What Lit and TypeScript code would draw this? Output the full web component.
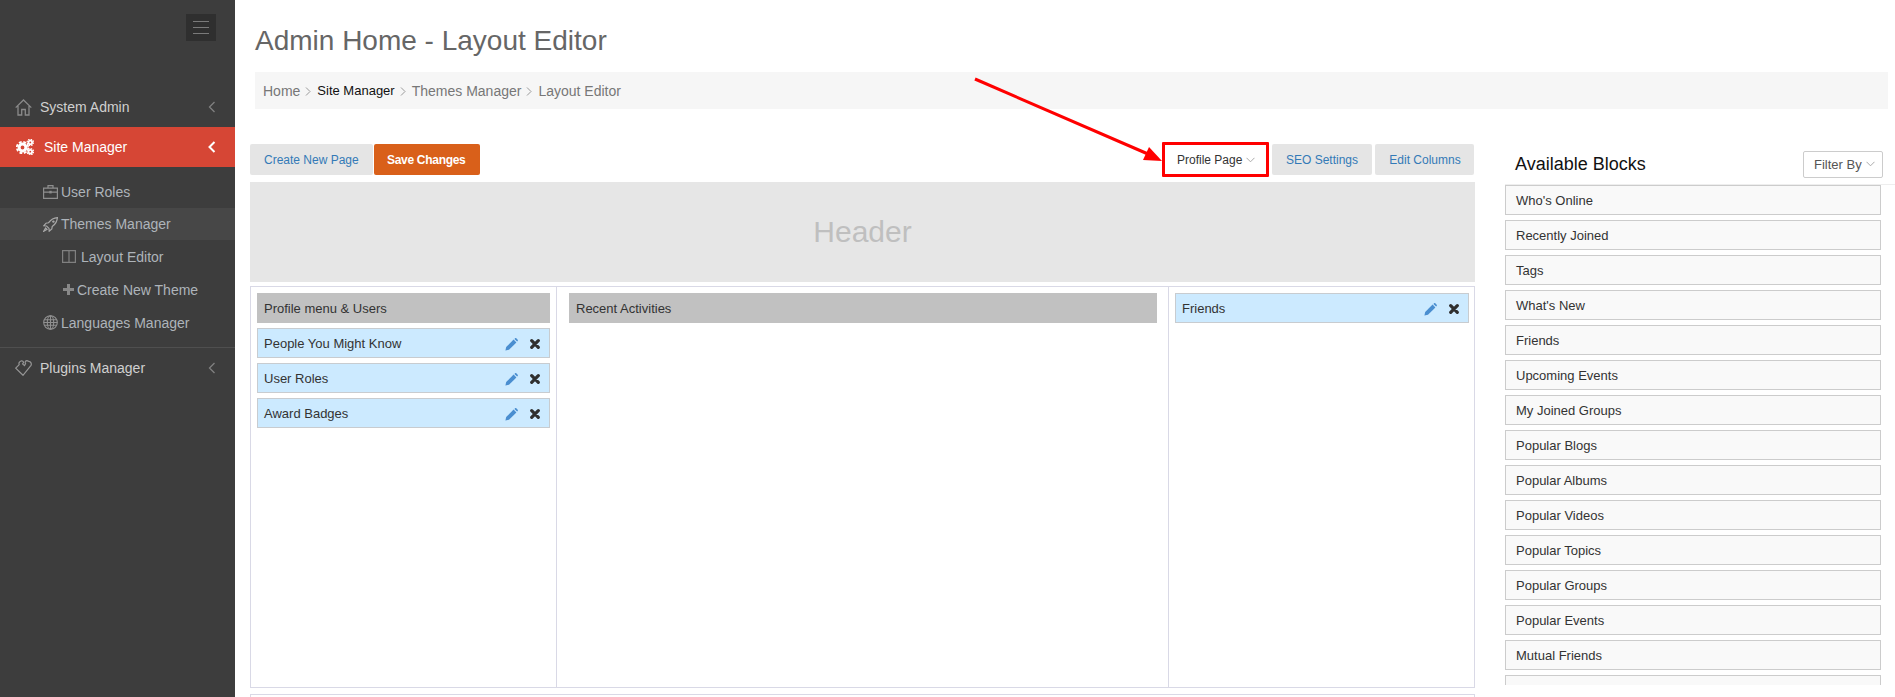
import { LitElement, html, css, svg } from "lit";
import { customElement } from "lit/decorators.js";

const ic = (w: number, h: number, vb: string, body: unknown, cls = "") =>
  html`<svg class="ic ${cls}" width=${w} height=${h} viewBox=${vb}>${body}</svg>`;

const chevL = (bold = false) =>
  ic(8, 12, "0 0 8 12", svg`<path d="M6.5 1 L1.5 6 L6.5 11" fill="none" stroke=${bold ? "#fff" : "#808080"} stroke-width=${bold ? 2 : 1.3}/>`);
const chevD = () =>
  ic(9, 6, "0 0 9 6", svg`<path d="M.5 .8 L4.5 4.8 L8.5 .8" fill="none" stroke="#aaa" stroke-width="1"/>`, "caret");
const chevR = () =>
  ic(6, 9, "0 0 6 9", svg`<path d="M1 .5 L5 4.5 L1 8.5" fill="none" stroke="#999" stroke-width="1"/>`, "sep");

const homeI = ic(17, 17, "0 0 17 17", svg`<path d="M.7 8.6 L8.5 1 L16.3 8.6 M3 7 V16 H6.7 V10.5 H10.3 V16 H14 V7" fill="none" stroke="#8a8a8a" stroke-width="1.3"/>`);
const gearsI = ic(18, 16, "0 0 18 16", svg`
  <circle cx="6.5" cy="8.5" r="3.4" fill="none" stroke="#fff" stroke-width="3"/>
  <circle cx="6.5" cy="8.5" r="5.7" fill="none" stroke="#fff" stroke-width="1.8" stroke-dasharray="2.8 1.7"/>
  <circle cx="14.3" cy="3.4" r="1.8" fill="none" stroke="#fff" stroke-width="1.8"/>
  <circle cx="14.3" cy="12.7" r="1.8" fill="none" stroke="#fff" stroke-width="1.8"/>
  <circle cx="14.3" cy="3.4" r="3.2" fill="none" stroke="#fff" stroke-width="1.2" stroke-dasharray="1.5 1"/>
  <circle cx="14.3" cy="12.7" r="3.2" fill="none" stroke="#fff" stroke-width="1.2" stroke-dasharray="1.5 1"/>`);
const bagI = ic(15, 14, "0 0 15 14", svg`<path d="M.6 3.2 H14.4 V13.4 H.6 Z M5 3.2 V.7 H10 V3.2 M.6 7.2 H14.4" fill="none" stroke="#8e8e8e" stroke-width="1.2"/><rect x="6.3" y="5.8" width="2.4" height="2.6" fill="#8e8e8e"/>`);
const rocketI = ic(15, 15, "0 0 15 15", svg`<path d="M14.4 .6 C10.6 .8 8 2.4 5.4 5.8 L3 6.2 L.8 8.8 L3.6 9 L6 11.4 L6.2 14.2 L8.8 12 L9.2 9.6 C12.6 7 14.2 4.4 14.4 .6 Z M.7 14.3 L2.6 11 L4 12.4 Z" fill="none" stroke="#a8a8a8" stroke-width="1.2"/><circle cx="10.4" cy="4.6" r="1.2" fill="#a8a8a8"/>`);
const colsI = ic(14, 13, "0 0 14 13", svg`<path d="M.6 .6 H13.4 V12.4 H.6 Z M7 .6 V12.4" fill="none" stroke="#808080" stroke-width="1.2"/>`);
const plusI = ic(11, 11, "0 0 11 11", svg`<path d="M5.5 0 V11 M0 5.5 H11" stroke="#888" stroke-width="3"/>`);
const globeI = ic(15, 15, "0 0 15 15", svg`<g fill="none" stroke="#909090" stroke-width="1.1"><circle cx="7.5" cy="7.5" r="6.8"/><ellipse cx="7.5" cy="7.5" rx="3.2" ry="6.8"/><path d="M7.5 .7 V14.3 M1.3 4.8 H13.7 M.7 7.5 H14.3 M1.3 10.2 H13.7"/></g>`);
const plugI = ic(17, 16, "0 0 17 16", svg`<path d="M.7 8.2 L4.2 4.7 C3.5 3 4.5 1.5 6 1 C7.5 .6 8.6 1.5 8.5 2.6 L7.6 4 L9.5 5.6 L10.6 3.6 C9.6 2 10.5 .6 12 .6 L15.4 2 C16.8 3.5 16.5 5.5 15 6.6 L8 15.3 Z" fill="none" stroke="#969696" stroke-width="1.2"/>`);

const pencilI = ic(13, 13, "0 0 13 13", svg`<path d="M.4 12.6 L1.2 9 L8.6 1.6 L11.4 4.4 L4 11.8 Z" fill="#4a8ed0"/><path d="M9.4 .9 L10.1 .3 C10.5 0 11 0 11.3 .3 L12.7 1.7 C13 2 13 2.5 12.7 2.9 L12.1 3.6 Z" fill="#4a8ed0"/>`);
const timesI = ic(10, 10, "0 0 10 10", svg`<path d="M1.7 1.7 L8.3 8.3 M8.3 1.7 L1.7 8.3" stroke="#2f2f2f" stroke-width="3.2" stroke-linecap="round"/>`);

const AVAILABLE = [
  "Who's Online", "Recently Joined", "Tags", "What's New", "Friends", "Upcoming Events",
  "My Joined Groups", "Popular Blogs", "Popular Albums", "Popular Videos", "Popular Topics",
  "Popular Groups", "Popular Events", "Mutual Friends", "",
];

@customElement("app-root")
export class AppRoot extends LitElement {
  static styles = css`
    :host { display: block; width: 1895px; height: 697px; overflow: hidden; position: relative;
      font-family: "Liberation Sans", Arial, sans-serif; background: #fff; color: #333; }
    * { box-sizing: border-box; }
    .ic { display: block; flex: none; }
    .shell { display: flex; height: 697px; }

    aside { width: 235px; flex: none; background: #3d3d3d; font-size: 14px; }
    .toggle-row { display: flex; justify-content: flex-end; padding: 14px 19px 0 0; height: 87px; }
    .toggle { width: 30px; height: 27px; background: #2f2f2f; display: flex; flex-direction: column;
      justify-content: center; gap: 5px; padding: 0 7px; }
    .toggle i { display: block; height: 1px; background: #7a7a7a; }
    .top { height: 40px; display: flex; align-items: center; padding: 0 19px 0 15px; color: #d0d0d0; }
    .top .lbl { flex: 1; margin-left: 8px; }
    .top.active { background: #d64635; color: #fff; padding-left: 16px; }
    .top.active .lbl { margin-left: 10px; }
    .top.sep { border-top: 1px solid #4f4f4f; height: 41px; }
    .subs { padding: 8px 0; }
    .sub { height: 33px; display: flex; align-items: center; padding-left: 43px; gap: 3px; color: #aeb4ba; }
    .sub.cur { background: #474747; height: 32px; }
    .sub.l2 { padding-left: 62px; }
    .sub.l2.cols { gap: 5px; }
    .sub.l2.plus { gap: 3px; padding-left: 63px; }

    main { flex: 1; min-width: 0; padding: 0 0 0 15px; height: 697px; overflow: hidden; }
    h1 { margin: 0; padding: 24px 0 0 5px; font-size: 28px; line-height: 34px; height: 72px; font-weight: 400; color: #666; }
    .crumbs { margin-left: 5px; width: 1633px; height: 37px; background: #f6f6f6; display: flex; align-items: center;
      padding-left: 8px; font-size: 14px; color: #777; }
    .crumbs b { font-weight: 400; color: #111; font-size: 13px; }
    .crumbs .sep { margin: 1px 6px 0 5px; }
    .content { display: flex; margin-top: 35px; }

    .editor { width: 1225px; flex: none; }
    .bar { display: flex; justify-content: space-between; align-items: center; height: 31px; }
    .group { display: flex; gap: 1px; align-items: center; }
    .group.right { gap: 3px; margin-right: 1px; }
    .btn { height: 31px; padding: 0 14px; border-radius: 2px; background: #e5e5e5; color: #337ab7; font-size: 12px;
      display: flex; align-items: center; white-space: nowrap; }
    .btn.save { background: #d9601a; color: #fff; font-weight: 700; padding: 0 13px; width: 106px; letter-spacing: -.3px; }
    .btn.create { width: 123px; }
    .btn.seo { width: 100px; justify-content: center; padding: 0; }
    .btn.edit { width: 99px; justify-content: center; padding: 0 0 0 1px; }
    .btn.profile { width: 107px; height: 35px; background: #fff; color: #333; border: 3px solid #f00; border-radius: 1px;
      gap: 4px; padding: 0 0 0 12px; }
    .header { height: 100px; margin-top: 7px; background: #e6e6e6; color: #bfbfbf; font-size: 30px;
      display: flex; align-items: center; justify-content: center; }
    .grid { margin-top: 4px; height: 402px; border: 1px solid #d9d9e6; display: grid; grid-template-columns: 305px 1fr 306px; }
    .col { padding: 6px 6px 0; display: flex; flex-direction: column; gap: 5px; border-left: 1px solid #d9d9e6; }
    .col:first-child { border-left: 0; }
    .col.mid { padding: 6px 11px 0 12px; }
    .col.last { padding: 6px 5px 0 6px; }
    .blk { height: 30px; border: 1px solid #c8ccd0; background: #cceaff; font-size: 13px; color: #333; display: flex; align-items: center;
      padding-left: 6px; padding-right: 9px; }
    .blk span { flex: 1; }
    .blk .act { display: flex; align-items: center; gap: 12px; margin-top: 2px; }
    .blk.head { background: #c1c1c1; border-color: #c1c1c1; }
    .next { margin-top: 6px; height: 40px; border: 1px solid #d9d9e6; }

    .panel { flex: 1; min-width: 0; margin-left: 30px; }
    .ph { display: flex; justify-content: space-between; align-items: center; height: 41px; padding: 0 12px 0 10px; border-bottom: 1px solid #eee; }
    .ph h3 { margin: 0; font-size: 18px; font-weight: 400; color: #111; }
    .filter { width: 80px; height: 27px; border: 1px solid #ccc; border-radius: 2px; font-size: 13px; color: #555;
      display: flex; align-items: center; gap: 4px; padding-left: 10px; background: #fff; }
    .list { width: 376px; height: 500px; overflow: hidden; display: flex; flex-direction: column; gap: 5px; }
    .item { flex: none; height: 30px; border: 1px solid #ccc; background: #f9f9f9; font-size: 13px; color: #333; display: flex; align-items: center; padding-left: 10px; }

    .overlay { position: absolute; left: 0; top: 0; pointer-events: none; }
  `;

  private row(t: string) {
    return html`<div class="blk"><span>${t}</span><div class="act">${pencilI}${timesI}</div></div>`;
  }

  render() {
    return html`
      <div class="shell">
        <aside>
          <div class="toggle-row"><div class="toggle"><i></i><i></i><i></i></div></div>
          <div class="top">${homeI}<span class="lbl">System Admin</span>${chevL()}</div>
          <div class="top active">${gearsI}<span class="lbl">Site Manager</span>${chevL(true)}</div>
          <div class="subs">
            <div class="sub">${bagI}<span>User Roles</span></div>
            <div class="sub cur">${rocketI}<span>Themes Manager</span></div>
            <div class="sub l2 cols">${colsI}<span>Layout Editor</span></div>
            <div class="sub l2 plus">${plusI}<span>Create New Theme</span></div>
            <div class="sub">${globeI}<span>Languages Manager</span></div>
          </div>
          <div class="top sep">${plugI}<span class="lbl">Plugins Manager</span>${chevL()}</div>
        </aside>
        <main>
          <h1>Admin Home - Layout Editor</h1>
          <div class="crumbs">
            <span>Home</span>${chevR()}<b>Site Manager</b>${chevR()}<span>Themes Manager</span>${chevR()}<span>Layout Editor</span>
          </div>
          <div class="content">
            <div class="editor">
              <div class="bar">
                <div class="group">
                  <div class="btn create">Create New Page</div>
                  <div class="btn save">Save Changes</div>
                </div>
                <div class="group right">
                  <div class="btn profile">Profile Page ${chevD()}</div>
                  <div class="btn seo">SEO Settings</div>
                  <div class="btn edit">Edit Columns</div>
                </div>
              </div>
              <div class="header">Header</div>
              <div class="grid">
                <div class="col">
                  <div class="blk head"><span>Profile menu &amp; Users</span></div>
                  ${this.row("People You Might Know")}
                  ${this.row("User Roles")}
                  ${this.row("Award Badges")}
                </div>
                <div class="col mid"><div class="blk head"><span>Recent Activities</span></div></div>
                <div class="col last">${this.row("Friends")}</div>
              </div>
              <div class="next"></div>
            </div>
            <div class="panel">
              <div class="ph">
                <h3>Available Blocks</h3>
                <div class="filter">Filter By ${chevD()}</div>
              </div>
              <div class="list">
                ${AVAILABLE.map((t) => html`<div class="item">${t}</div>`)}
              </div>
            </div>
          </div>
        </main>
      </div>
      <svg class="overlay" width="1895" height="697">
        <line x1="975" y1="79" x2="1148" y2="154" stroke="#f00" stroke-width="3"/>
        <polygon points="1162,161 1143,160 1149,147" fill="#f00"/>
      </svg>
    `;
  }
}
